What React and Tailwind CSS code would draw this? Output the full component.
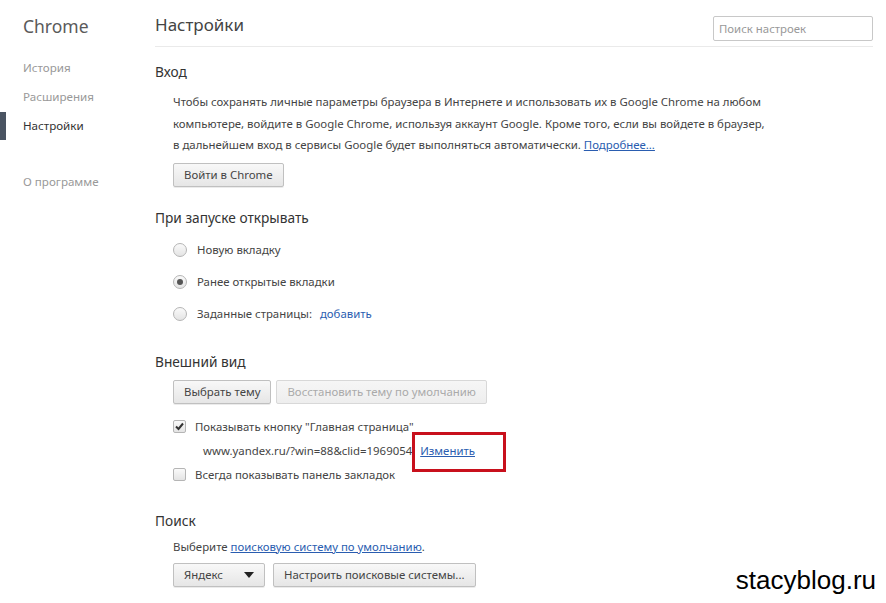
import React from "react";

const font = { fontFamily: '"Noto Sans", "Open Sans", sans-serif' };

function Radio({ checked }) {
    return (
        <span className="w-[14px] h-[14px] rounded-full border border-[#b5b5b5] bg-gradient-to-b from-[#fafafa] to-[#e4e4e4] flex items-center justify-center shrink-0">
            {checked && <span className="w-[6px] h-[6px] rounded-full bg-[#555]" />}
        </span>
    );
}

function Checkbox({ checked }) {
    return (
        <span className="w-[13px] h-[13px] rounded-[2px] border border-[#b5b5b5] bg-gradient-to-b from-[#fafafa] to-[#e4e4e4] flex items-center justify-center shrink-0">
            {checked && (
                <svg width="11" height="11" viewBox="0 0 11 11">
                    <path d="M2 5.5 L4.5 8 L9 2.5" fill="none" stroke="#333" strokeWidth="2" />
                </svg>
            )}
        </span>
    );
}

function Btn({ children, disabled, className = "" }) {
    return (
        <button
            className={`h-[24px] px-[10px] rounded-[2px] border text-[11.4px] bg-gradient-to-b ${
                disabled
                    ? "border-[#d8d8d8] from-[#f6f6f6] to-[#eeeeee] text-[#aaa]"
                    : "border-[#c0c0c0] from-[#f8f8f8] to-[#e6e6e6] text-[#444] shadow-[0_1px_0_rgba(0,0,0,0.08)]"
            } ${className}`}
        >
            {children}
        </button>
    );
}

export default function App() {
    return (
        <div className="w-[886px] h-[603px] bg-white flex overflow-hidden relative" style={font}>
            {/* sidebar */}
            <div className="w-[155px] shrink-0 pt-[13px]">
                <div className="pl-[23px] text-[17.5px] text-[#5a5a5a] leading-[26px]">Chrome</div>
                <ul className="mt-[21px] text-[11.6px] text-[#999]">
                    <li className="pl-[23px] h-[29px] leading-[16px]">История</li>
                    <li className="pl-[23px] h-[29px] leading-[16px]">Расширения</li>
                    <li className="h-[28px] flex">
                        <span className="w-[6px] h-[28px] -mt-[6px] bg-[#4a5462]" />
                        <span className="pl-[17px] leading-[16px] text-[#333]">Настройки</span>
                    </li>
                    <li className="pl-[23px] mt-[28px] leading-[16px]">О программе</li>
                </ul>
            </div>

            {/* main */}
            <div className="flex-1 pr-[13px]">
                <div className="flex items-start justify-between h-[47px] border-b border-[#eaeaea] pt-[14px]">
                    <h1 className="text-[17px] text-[#444] leading-[22px]">Настройки</h1>
                    <div className="w-[160px] h-[25px] border border-[#c8c8c8] rounded-[2px] px-[5px] text-[11.4px] text-[#999] leading-[23px] mt-[2px]">
                        Поиск настроек
                    </div>
                </div>

                <section className="mt-[16px]">
                    <h2 className="text-[13.7px] text-[#333] leading-[18px]">Вход</h2>
                    <div className="pl-[18px] mt-[10px]">
                        <p className="text-[11.4px] text-[#444] leading-[21.5px] whitespace-nowrap">
                            Чтобы сохранять личные параметры браузера в Интернете и использовать их в Google Chrome на любом
                            <br />
                            компьютере, войдите в Google Chrome, используя аккаунт Google. Кроме того, если вы войдете в браузер,
                            <br />
                            в дальнейшем вход в сервисы Google будет выполняться автоматически.{" "}
                            <a className="text-[#2a5db0] underline">Подробнее...</a>
                        </p>
                        <Btn className="mt-[7px]">Войти в Chrome</Btn>
                    </div>
                </section>

                <section className="mt-[22px]">
                    <h2 className="text-[13.7px] text-[#333] leading-[18px]">При запуске открывать</h2>
                    <div className="pl-[18px] mt-[14px] flex flex-col gap-[14px] text-[11.4px] text-[#444]">
                        <label className="flex items-center gap-[10px] h-[18px]">
                            <Radio /> Новую вкладку
                        </label>
                        <label className="flex items-center gap-[10px] h-[18px]">
                            <Radio checked /> Ранее открытые вкладки
                        </label>
                        <label className="flex items-center gap-[10px] h-[18px]">
                            <Radio /> Заданные страницы:
                            <a className="text-[#2a5db0] -ml-[2px]">добавить</a>
                        </label>
                    </div>
                </section>

                <section className="mt-[30px]">
                    <h2 className="text-[13.7px] text-[#333] leading-[18px]">Внешний вид</h2>
                    <div className="pl-[18px] mt-[9px]">
                        <div className="flex gap-[5px]">
                            <Btn>Выбрать тему</Btn>
                            <Btn disabled>Восстановить тему по умолчанию</Btn>
                        </div>
                        <div className="mt-[14px] text-[11.4px] text-[#444]">
                            <label className="flex items-center gap-[9px] h-[18px]">
                                <Checkbox checked /> Показывать кнопку "Главная страница"
                            </label>
                            <div className="relative pl-[30px] mt-[6px] h-[18px] leading-[18px] flex gap-[8px]">
                                <span>www.yandex.ru/?win=88&amp;clid=1969054</span>
                                <a className="text-[#2a5db0] underline">Изменить</a>
                                <span className="absolute left-[239px] -top-[10px] w-[94px] h-[40px] border-[3px] border-[#c8101c]" />
                            </div>
                            <label className="flex items-center gap-[9px] h-[18px] mt-[6px]">
                                <Checkbox /> Всегда показывать панель закладок
                            </label>
                        </div>
                    </div>
                </section>

                <section className="mt-[28px]">
                    <h2 className="text-[13.7px] text-[#333] leading-[18px]">Поиск</h2>
                    <div className="pl-[18px] mt-[8px]">
                        <p className="text-[11.4px] text-[#444] leading-[18px]">
                            Выберите <a className="text-[#2a5db0] underline">поисковую систему по умолчанию</a>.
                        </p>
                        <div className="flex gap-[8px] mt-[7px]">
                            <Btn className="w-[92px] flex items-center justify-between">
                                <span>Яндекс</span>
                                <svg width="10" height="6" viewBox="0 0 10 6">
                                    <path d="M0 0 L10 0 L5 6 Z" fill="#222" />
                                </svg>
                            </Btn>
                            <Btn>Настроить поисковые системы...</Btn>
                        </div>
                    </div>
                </section>
            </div>

            <div
                className="absolute right-[10px] bottom-[8px] text-[26px] text-black leading-[30px]"
                style={{ fontFamily: '"Liberation Sans", Arial, sans-serif' }}
            >
                stacyblog.ru
            </div>
        </div>
    );
}
